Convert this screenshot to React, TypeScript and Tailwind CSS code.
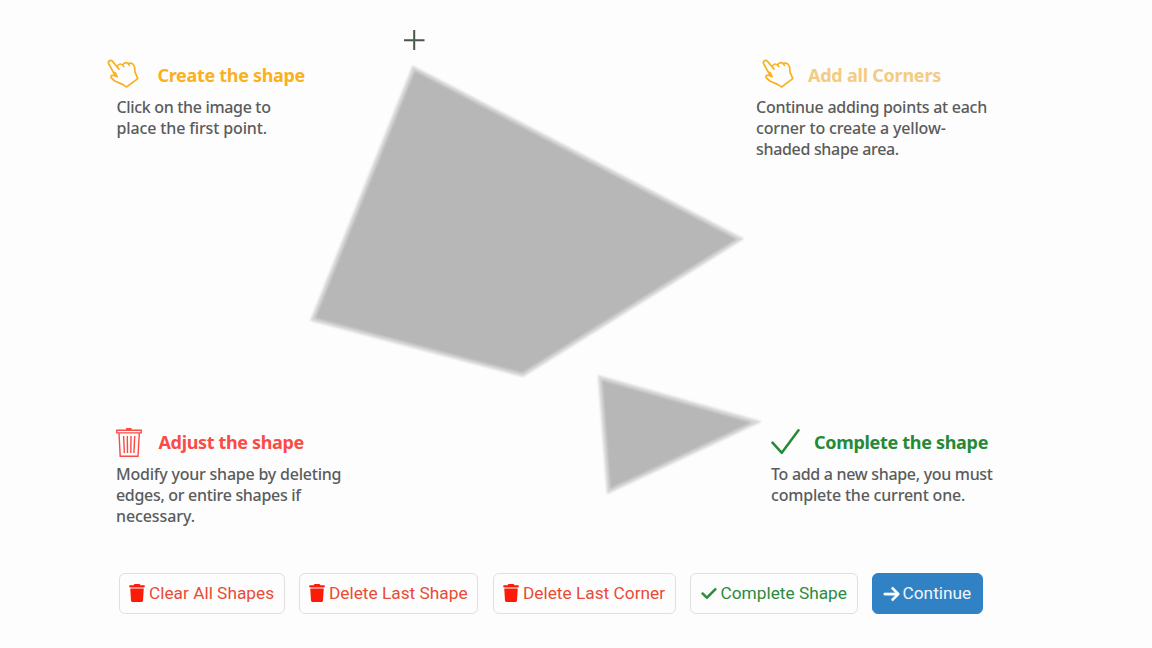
import type { ReactNode } from 'react';
import { FaTrash, FaCheck, FaArrowRight } from 'react-icons/fa6';

function Hand() {
  return (
    <svg className="h-[32px] w-[34px] shrink-0" viewBox="0 0 34 32" fill="none" stroke="#f9b122" strokeWidth="1.7" strokeLinejoin="round" strokeLinecap="round">
      <path d="M9.5 18 L2.8 6 C1.4 3.2 4.6 1 6.6 3.4 L13 11.2 M13 11.2 L11.2 8.7 C12.5 5.4 15.5 4.8 17.8 8.6 M16.7 6.8 C18.5 3.6 21.7 4 23.5 7.4 M22.5 5.3 C26 4.3 27.9 6.5 28.7 9.8 L29 14.2 L31.8 20.6 L20.5 29 L17 26.6 L8.8 23 L5 19.6 C4.5 17 7.1 16.8 11.2 18.6 L9 14.5" />
    </svg>
  );
}

function Bin() {
  return (
    <svg className="h-[30px] w-[26px] shrink-0" viewBox="0 0 26 30" fill="none" stroke="#fa4b45" strokeWidth="1.4">
      <path d="M.8 2.2H25.2V4.9H.8ZM10.8 2V.8H14.9V2M3 5 4.2 28.3H22L23.3 5M7.6 8 8.4 25M11.3 8 11.5 25M15 8 14.8 25M18.7 8 17.9 25" />
    </svg>
  );
}

function Tick() {
  return (
    <svg className="h-[28px] w-[30px] shrink-0" viewBox="0 0 30 28" fill="none" stroke="#258a35" strokeWidth="2.5" strokeLinecap="round" strokeLinejoin="round">
      <path d="M1.5 14.7 10.8 24.8 27.5 2.3" />
    </svg>
  );
}

function Heading({ className, children }: { className: string; children: ReactNode }) {
  return <h2 className={`whitespace-nowrap text-[18px] leading-[26px] font-bold ${className}`}>{children}</h2>;
}

function Copy({ lines }: { lines: [string, string][] }) {
  return (
    <p className="text-[16px] leading-[21px] font-medium text-[#5a5c5c]">
      {lines.map(([text, spacing]) => (
        <span key={text} className={`block whitespace-nowrap ${spacing}`}>{text}</span>
      ))}
    </p>
  );
}

function Action({ className, icon, children }: { className: string; icon: ReactNode; children: ReactNode }) {
  return (
    <button className={`flex h-[41px] shrink-0 items-center rounded-[6px] border font-[Roboto,sans-serif] text-[17.3px] whitespace-nowrap ${className}`}>
      {icon}
      <span className="pt-px">{children}</span>
    </button>
  );
}

function Canvas() {
  return (
    <svg className="pointer-events-none absolute inset-0 h-[648px] w-[1152px]" viewBox="0 0 1152 648">
      <defs>
        <filter id="soft" x="-5%" y="-5%" width="110%" height="110%"><feGaussianBlur stdDeviation="0.8" /></filter>
      </defs>
      <g fill="#b7b7b7" stroke="#d6d6d6" strokeWidth="3.5" filter="url(#soft)">
        <path d="M413.5 68 740.5 239 522.5 375 312.5 319.5Z" />
        <path d="M599.8 377.5 757 422 608.5 491.5Z" />
      </g>
      <path d="M404 40.2H424.5M414.2 30V50" stroke="#505250" strokeWidth="2" />
      <circle cx="414.2" cy="40.2" r="1" fill="#258a35" />
    </svg>
  );
}

export default function App() {
  return (
    <main className="relative h-[648px] w-[1152px] overflow-hidden bg-[#fdfdfd] font-['Noto_Sans',sans-serif]">
      <Canvas />
      <div className="flex h-[425px] pt-[58px] pl-[106px]">
        <section className="w-[650px]">
          <div className="flex h-[39px] gap-[17.5px]">
            <Hand />
            <Heading className="pt-[4px] tracking-[-0.32px] text-[#fbb01e]">Create the shape</Heading>
          </div>
          <div className="pl-[10.5px]">
            <Copy lines={[['Click on the image to', 'tracking-[-0.33px]'], ['place the first point.', 'tracking-[-0.14px]']]} />
          </div>
        </section>
        <section>
          <div className="flex h-[39px] gap-[13px] pl-[5px]">
            <Hand />
            <Heading className="pt-[4px] tracking-[-0.23px] text-[#f3cb81]">Add all Corners</Heading>
          </div>
          <Copy lines={[['Continue adding points at each', 'tracking-[-0.27px]'], ['corner to create a yellow-', 'tracking-[-0.16px]'], ['shaded shape area.', 'tracking-[-0.32px]']]} />
        </section>
      </div>
      <div className="flex h-[148px] pl-[116px]">
        <section className="w-[655px]">
          <div className="flex h-[39px] gap-[16.5px] pt-[3px]">
            <Bin />
            <Heading className="pt-[1px] tracking-[-0.35px] text-[#fa4b45]">Adjust the shape</Heading>
          </div>
          <Copy lines={[['Modify your shape by deleting', 'tracking-[-0.22px]'], ['edges, or entire shapes if', 'tracking-[-0.31px]'], ['necessary.', 'tracking-[-0.1px]']]} />
        </section>
        <section>
          <div className="flex h-[39px] gap-[13px] pt-[3px]">
            <Tick />
            <Heading className="pt-[1px] tracking-[-0.31px] text-[#258a35]">Complete the shape</Heading>
          </div>
          <Copy lines={[['To add a new shape, you must', 'tracking-[-0.31px]'], ['complete the current one.', 'tracking-[-0.2px]']]} />
        </section>
      </div>
      <footer className="flex pl-[119px]">
        <Action className="mr-[14px] w-[166px] gap-[4px] border-[#e0e0e0] pl-[9px] text-[#e94b35]" icon={<FaTrash className="mb-px h-[18px] w-[16px] text-[#fb1b08]" />}>Clear All Shapes</Action>
        <Action className="mr-[15px] w-[179px] gap-[4px] border-[#e0e0e0] pl-[9px] text-[#e94b35]" icon={<FaTrash className="mb-px h-[18px] w-[16px] text-[#fb1b08]" />}>Delete Last Shape</Action>
        <Action className="mr-[14px] w-[183px] gap-[4px] border-[#e0e0e0] pl-[9px] text-[#e94b35]" icon={<FaTrash className="mb-px h-[18px] w-[16px] text-[#fb1b08]" />}>Delete Last Corner</Action>
        <Action className="mr-[14px] w-[168px] gap-[4px] border-[#e0e0e0] pl-[9.5px] text-[#2c8b3e]" icon={<FaCheck className="h-[17px] w-[16px] stroke-[#258a35] stroke-[15]" />}>Complete Shape</Action>
        <Action className="w-[111px] gap-[3px] border-[#3182c4] bg-[#3182c4] pl-[9.5px] text-[#eff5fa]" icon={<FaArrowRight className="h-[18px] w-[17px] stroke-white stroke-[15] text-white" />}>Continue</Action>
      </footer>
    </main>
  );
}
